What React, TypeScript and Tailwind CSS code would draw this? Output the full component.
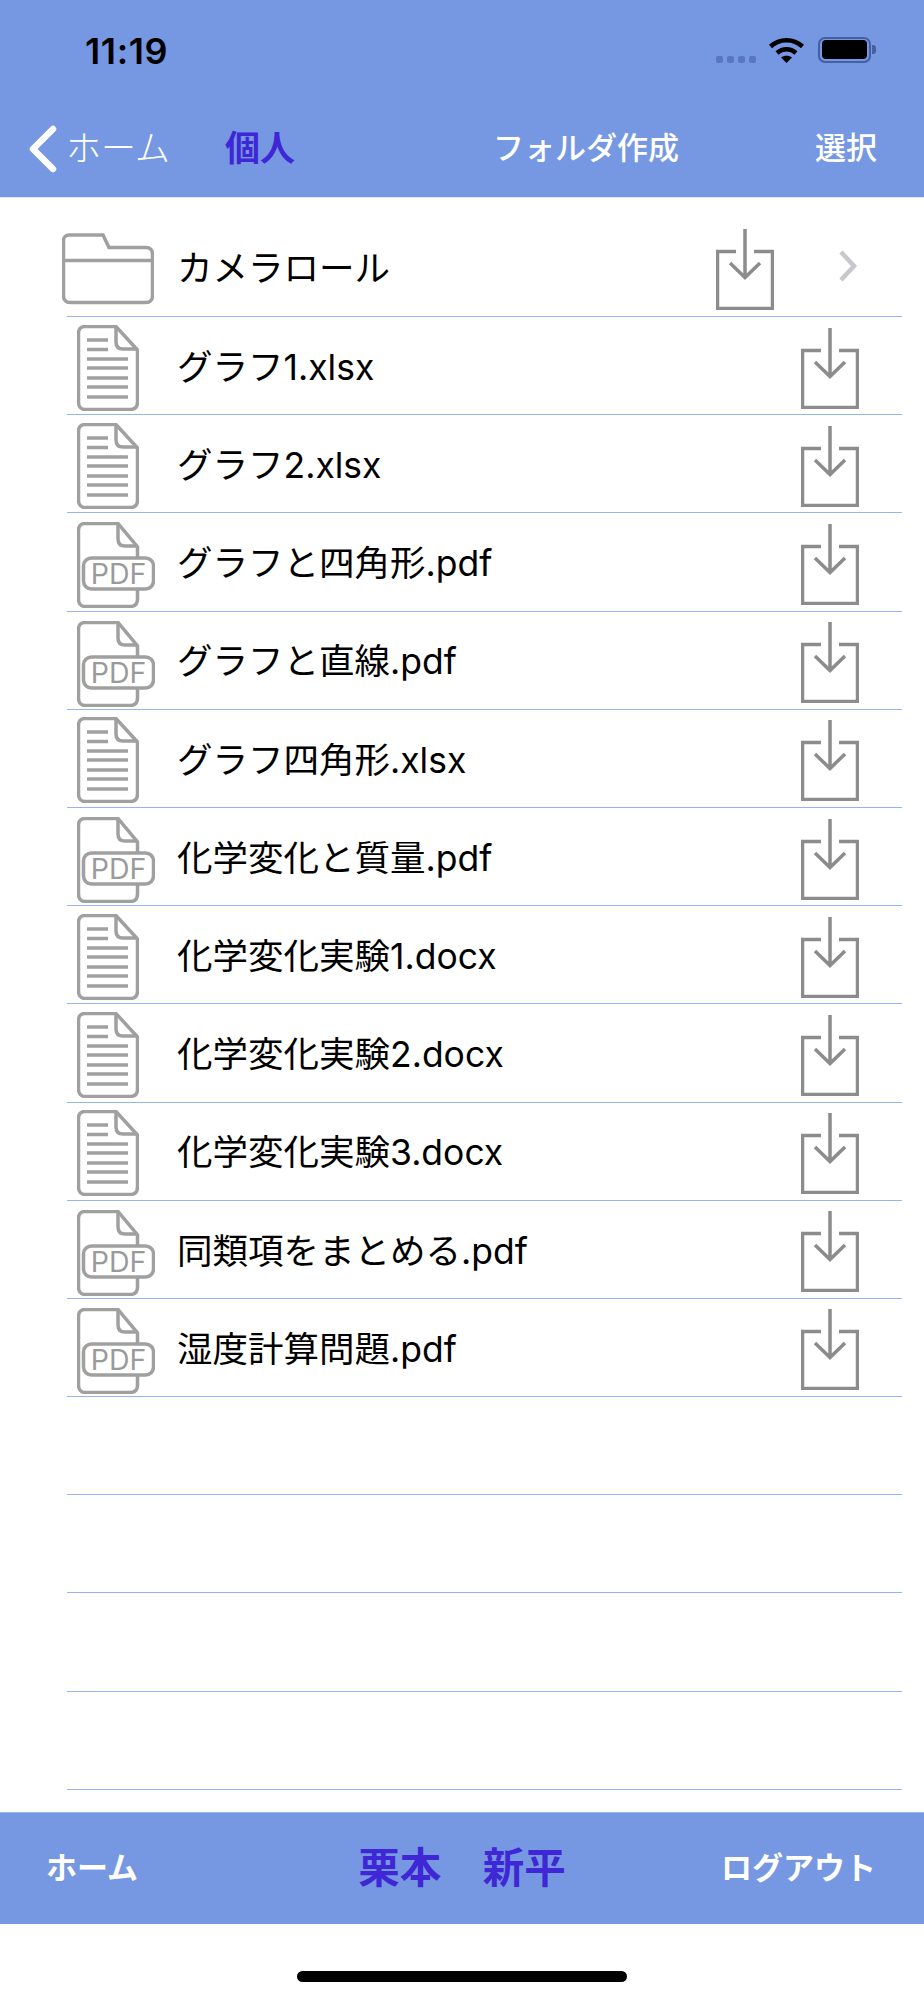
const files = [
  { name: "グラフ1.xlsx", pdf: false },
  { name: "グラフ2.xlsx", pdf: false },
  { name: "グラフと四角形.pdf", pdf: true },
  { name: "グラフと直線.pdf", pdf: true },
  { name: "グラフ四角形.xlsx", pdf: false },
  { name: "化学変化と質量.pdf", pdf: true },
  { name: "化学変化実験1.docx", pdf: false },
  { name: "化学変化実験2.docx", pdf: false },
  { name: "化学変化実験3.docx", pdf: false },
  { name: "同類項をまとめる.pdf", pdf: true },
  { name: "湿度計算問題.pdf", pdf: true },
];

function DownloadIcon() {
  return (
    <svg width="58" height="82" viewBox="0 0 58 82" fill="none" stroke="#8c8c8c" strokeWidth="3.5" className="shrink-0">
      <path d="M20 23.5H1.5V80.5H56.5V23.5H38" />
      <path d="M29 1V49M14 35L29 49.5L44 35" />
    </svg>
  );
}

function FolderIcon() {
  return (
    <svg width="92" height="72" viewBox="0 0 92 72" fill="none" stroke="#a0a0a0" strokeWidth="3.5" className="shrink-0">
      <path d="M7 2H41L47 14.5H84C88 14.5 90.5 17 90.5 21V63C90.5 67 88 69.5 84 69.5H8C4 69.5 1.5 67 1.5 63V7.5C1.5 4 4 2 7 2Z" />
      <path d="M1.5 27.5H90.5" />
    </svg>
  );
}

function DocIcon() {
  return (
    <svg width="62" height="86" viewBox="0 0 62 86" fill="none" stroke="#a0a0a0" strokeWidth="3.5" className="shrink-0">
      <path d="M8 1.5H39L60.5 25V77C60.5 81.5 58 84.5 53 84.5H8C4 84.5 1.5 81.5 1.5 77V8C1.5 4 4 1.5 8 1.5Z" />
      <path d="M39 1.5V17C39 21.5 41.5 24 46 24H60.5" />
      <path d="M10 15H31M10 24.5H31M10 34H51M10 43H51M10 53H51M10 62H51M10 72H51" />
    </svg>
  );
}

function PdfIcon() {
  return (
    <svg width="78" height="86" viewBox="0 0 78 86" fill="none" stroke="#a0a0a0" strokeWidth="3.5" className="shrink-0 mt-[3px]">
      <path d="M60.5 35V25L41 1.5H8C4 1.5 1.5 4 1.5 8V77C1.5 81.5 4 84.5 8 84.5H53C58 84.5 60.5 81.5 60.5 77V67" />
      <path d="M41 1.5V17C41 21.5 43.5 24 48 24H60.5" />
      <rect x="6.5" y="36" width="70" height="31" rx="8" fill="#fff" />
      <text x="41.5" y="62" textAnchor="middle" fontFamily="Inter, sans-serif" fontSize="28.5" fontWeight="400" fill="#9a9a9a" stroke="none">PDF</text>
    </svg>
  );
}

function Wifi() {
  return (
    <svg width="37" height="26" viewBox="0 0 36 26" fill="none" stroke="#000" className="shrink-0">
      <path d="M2 9.5C11 1 25 1 34 9.5" strokeWidth="4.5" />
      <path d="M8.5 16C14 11 22 11 27.5 16" strokeWidth="4.5" />
      <path d="M12.5 20.5C15.5 18 20.5 18 23.5 20.5L18 26Z" fill="#000" stroke="none" />
    </svg>
  );
}

export default function App() {
  return (
    <div className="flex h-[2000px] w-[924px] flex-col overflow-hidden bg-white font-[Inter,'Noto_Sans_CJK_JP',sans-serif] text-black">
      <header className="h-[198px] shrink-0 border-b border-[#e4e8f0] bg-[#7698e3]">
        <div className="flex h-[99px] items-center pl-[85px] pr-[48px]">
          <span className="pt-[2px] text-[36px] font-semibold tracking-[0.6px]">11:19</span>
          <div className="ml-auto flex items-center">
            <div className="mt-[19px] flex gap-[3.5px]">
              <span className="h-[7px] w-[7.5px] rounded-[2px] bg-[#5a76c0]" />
              <span className="h-[7px] w-[7.5px] rounded-[2px] bg-[#5a76c0]" />
              <span className="h-[7px] w-[7.5px] rounded-[2px] bg-[#5a76c0]" />
              <span className="h-[7px] w-[7.5px] rounded-[2px] bg-[#5a76c0]" />
            </div>
            <div className="ml-[12px]">
              <Wifi />
            </div>
            <div className="ml-[13px] flex items-center">
              <div className="flex h-[26px] w-[53px] items-center justify-center rounded-[7px] border-[2px] border-[#44609f]">
                <div className="h-[19px] w-[45px] rounded-[4px] bg-black" />
              </div>
              <div className="ml-[1px] h-[9px] w-[4px] rounded-r-[3px] bg-[#44609f]" />
            </div>
          </div>
        </div>
        <nav className="flex h-[97px] items-center pl-[29px] pt-[2px]">
          <svg width="28" height="48" viewBox="0 0 28 48" fill="none" stroke="#fff" strokeWidth="6.5" strokeLinecap="round" strokeLinejoin="round" className="shrink-0">
            <path d="M24 4L4 24L24 44" />
          </svg>
          <span className="ml-[9px] text-[35px] font-light text-white">ホーム</span>
          <span className="ml-[55px] text-[35px] font-bold text-[#3f27d6]">個人</span>
          <span className="ml-[198px] text-[31px] font-medium text-white">フォルダ作成</span>
          <span className="ml-[136px] text-[31px] font-medium text-white">選択</span>
        </nav>
      </header>

      <main>
        <div className="ml-[67px] mr-[22px] flex h-[119px] items-center border-b border-[#94b4f2] pt-[23px]">
          <div className="-ml-[5px] w-[115px]">
            <FolderIcon />
          </div>
          <span className="text-[35.5px] leading-none">カメラロール</span>
          <div className="ml-auto">
            <DownloadIcon />
          </div>
          <svg width="20" height="32" viewBox="0 0 20 32" fill="none" stroke="#c8c8cc" strokeWidth="4.5" className="mb-[5px] ml-[64px] mr-[44px] shrink-0">
            <path d="M3 2L16 16L3 30" />
          </svg>
        </div>
        {files.map((file) => (
          <div key={file.name} className="ml-[67px] mr-[22px] flex h-[98.2px] items-center border-b border-[#94b4f2] pt-[4px]">
            <div className="w-[110px] pl-[10px]">{file.pdf ? <PdfIcon /> : <DocIcon />}</div>
            <span className="text-[35.5px] leading-none">{file.name}</span>
            <div className="ml-auto mr-[43px]">
              <DownloadIcon />
            </div>
          </div>
        ))}
        <div className="ml-[67px] mr-[22px] h-[98.2px] border-b border-[#94b4f2]" />
        <div className="ml-[67px] mr-[22px] h-[98.2px] border-b border-[#94b4f2]" />
        <div className="ml-[67px] mr-[22px] h-[98.2px] border-b border-[#94b4f2]" />
        <div className="ml-[67px] mr-[22px] h-[98.2px] border-b border-[#94b4f2]" />
      </main>

      <footer className="mt-auto grid h-[112px] shrink-0 grid-cols-3 items-center border-t border-[#94b4f2] bg-[#7698e3] font-bold">
        <span className="pl-[46px] text-[31px] text-white">ホーム</span>
        <span className="whitespace-nowrap text-center text-[41.5px] text-[#3f27d6]">栗本　新平</span>
        <span className="whitespace-nowrap pr-[48px] text-right text-[31px] text-white">ログアウト</span>
      </footer>
      <div className="flex h-[76px] shrink-0 items-end justify-center pb-[18px]">
        <div className="h-[11px] w-[330px] rounded-full bg-black" />
      </div>
    </div>
  );
}
